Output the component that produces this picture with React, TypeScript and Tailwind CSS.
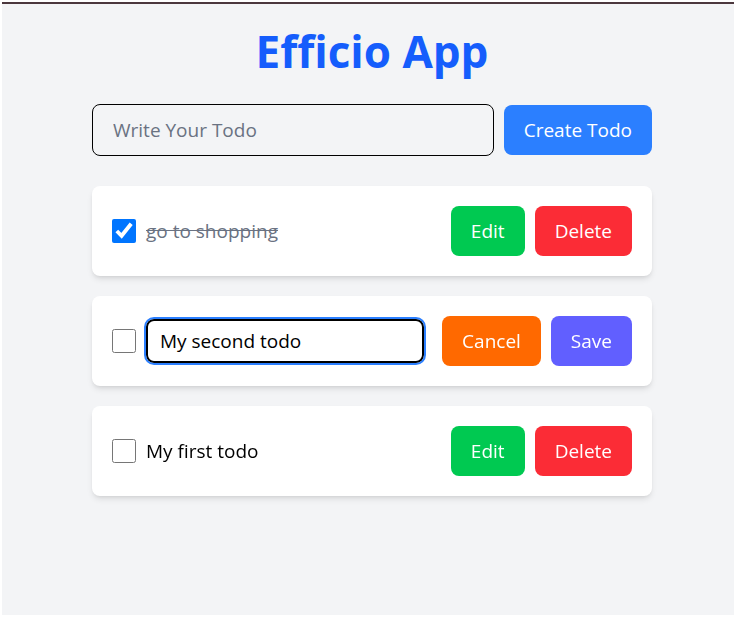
import { useState } from 'react';

type Todo = {
  id: number;
  text: string;
  done: boolean;
};

const font = { fontFamily: '"Open Sans", "Noto Sans", sans-serif' };

const App = () => {
  const [todos, setTodos] = useState<Todo[]>([
    { id: 3, text: 'go to shopping', done: true },
    { id: 2, text: 'My second todo', done: false },
    { id: 1, text: 'My first todo', done: false },
  ]);
  const [editingId, setEditingId] = useState<number | null>(2);
  const [draft, setDraft] = useState('My second todo');
  const [newTodo, setNewTodo] = useState('');

  const toggle = (id: number) =>
    setTodos((prev) => prev.map((t) => (t.id === id ? { ...t, done: !t.done } : t)));

  return (
    <div className="bg-white min-h-[618px] pt-[2px] px-[2px] pb-[3px]" style={font}>
      <div className="h-[613px] bg-gray-100 border-t-2 border-[#4b373d]">
        <div className="w-[560px] ml-[90px] pt-[25px]">
          <h1 className="text-center text-[44px] leading-none font-bold text-blue-600">
            Efficio App
          </h1>

          <div className="flex gap-[10px] mt-[31px] items-center">
            <input
              value={newTodo}
              onChange={(e) => setNewTodo(e.target.value)}
              placeholder="Write Your Todo"
              className="flex-1 h-[52px] px-5 border border-black rounded-lg text-[19px] bg-transparent outline-none placeholder:text-gray-500"
            />
            <button className="h-[50px] px-5 bg-blue-500 rounded-lg text-white text-[19px]">
              Create Todo
            </button>
          </div>

          <div className="flex flex-col gap-5 mt-[30px]">
            {todos.map((todo) => (
              <div
                key={todo.id}
                className="flex items-center justify-between bg-white rounded-lg shadow-md p-5"
              >
                <div className="flex items-center gap-[10px]">
                  <input
                    type="checkbox"
                    checked={todo.done}
                    onChange={() => toggle(todo.id)}
                    className="w-6 h-6"
                  />
                  {editingId === todo.id ? (
                    <input
                      autoFocus
                      value={draft}
                      onChange={(e) => setDraft(e.target.value)}
                      className="w-[278px] h-[44px] px-3 border-2 border-black rounded-lg text-[19px] outline-2 outline-blue-500"
                    />
                  ) : (
                    <span
                      className={
                        todo.done
                          ? 'text-[19px] text-gray-500 line-through'
                          : 'text-[19px] text-black'
                      }
                    >
                      {todo.text}
                    </span>
                  )}
                </div>
                {editingId === todo.id ? (
                  <div className="flex gap-[10px]">
                    <button
                      onClick={() => setEditingId(null)}
                      className="h-[50px] px-5 bg-orange-500 rounded-lg text-white text-[19px]"
                    >
                      Cancel
                    </button>
                    <button
                      onClick={() => {
                        setTodos((prev) =>
                          prev.map((t) => (t.id === todo.id ? { ...t, text: draft } : t)),
                        );
                        setEditingId(null);
                      }}
                      className="h-[50px] px-5 bg-indigo-500 rounded-lg text-white text-[19px]"
                    >
                      Save
                    </button>
                  </div>
                ) : (
                  <div className="flex gap-[10px]">
                    <button
                      onClick={() => {
                        setEditingId(todo.id);
                        setDraft(todo.text);
                      }}
                      className="h-[50px] px-5 bg-green-500 rounded-lg text-white text-[19px]"
                    >
                      Edit
                    </button>
                    <button
                      onClick={() => setTodos((prev) => prev.filter((t) => t.id !== todo.id))}
                      className="h-[50px] px-5 bg-red-500 rounded-lg text-white text-[19px]"
                    >
                      Delete
                    </button>
                  </div>
                )}
              </div>
            ))}
          </div>
        </div>
      </div>
    </div>
  );
};

export default App;
